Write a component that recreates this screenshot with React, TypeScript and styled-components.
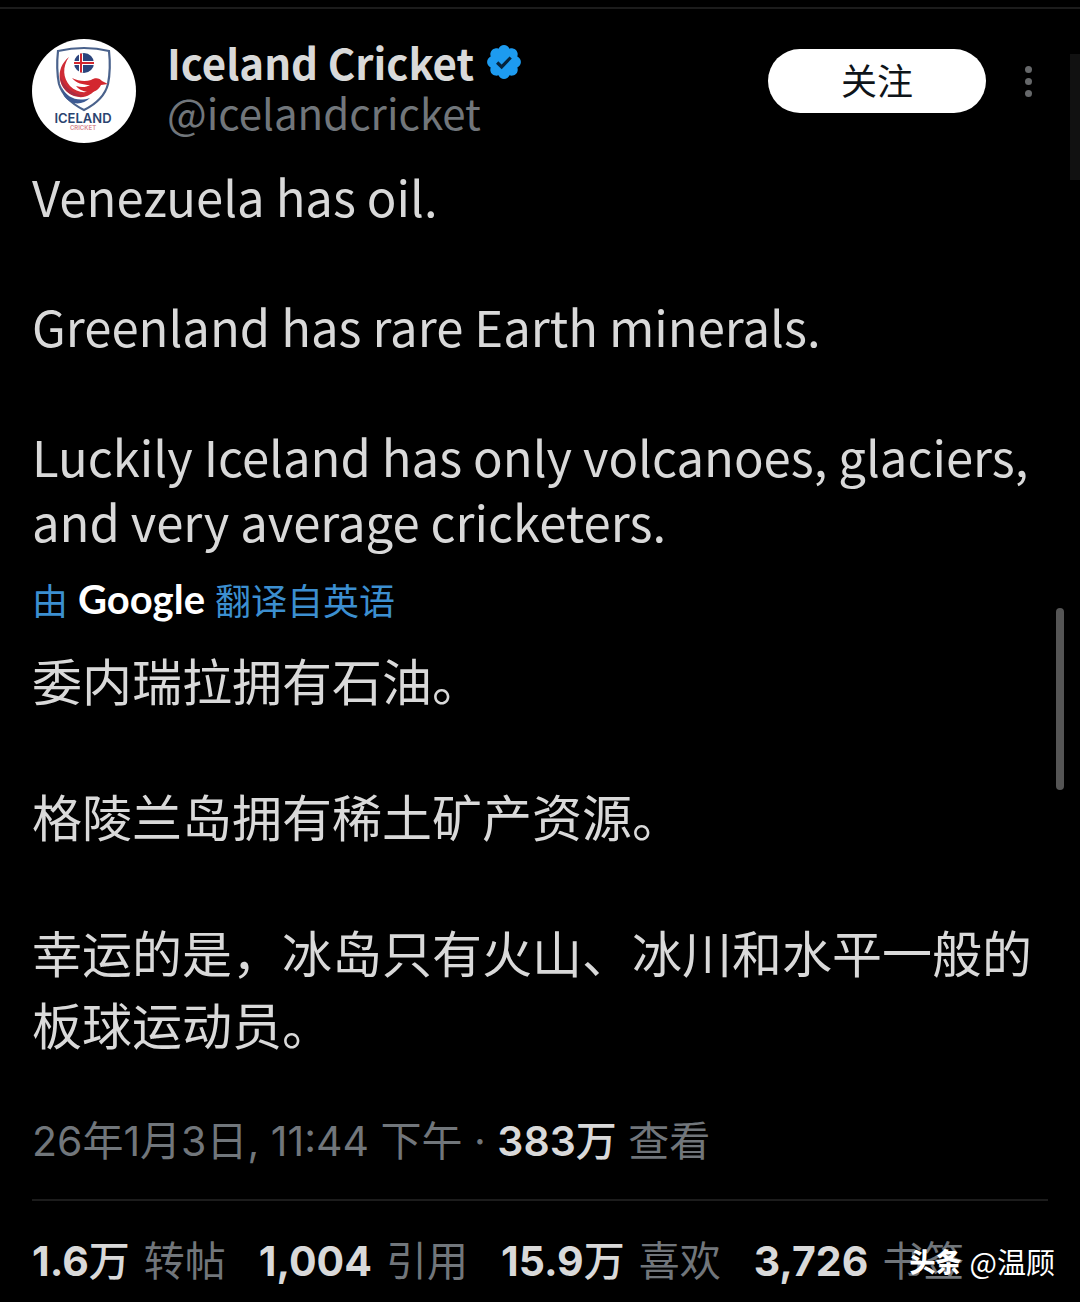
import React from 'react';
import styled, { createGlobalStyle } from 'styled-components';

const text = '"Noto Sans CJK SC", sans-serif';
const figures = 'Inter, "Noto Sans CJK SC", sans-serif';

const GlobalStyle = createGlobalStyle`
  *, *::before, *::after { box-sizing: border-box; }
  body { margin: 0; background: #000; color: #d9d9d9; font-family: ${text}; }
  p, h1 { margin: 0; }
  button { border: 0; font: inherit; cursor: pointer; }
  a { color: inherit; text-decoration: none; }
`;

const Page = styled.main`
  position: relative;
  padding: 7px 32px 12px;
  overflow: hidden;

  &::before {
    content: '';
    display: block;
    height: 2px;
    margin: 0 -32px;
    background: #1c1c1c;
  }
`;

const Header = styled.header`
  display: flex;
  align-items: flex-start;
  padding-top: 30px;
`;

const Avatar = styled.svg`
  flex: none;
  width: 104px;
  height: 104px;
`;

const Identity = styled.div`
  flex: 1;
  display: flex;
  flex-direction: column;
  margin: -2px 0 0 31px;
`;

const NameRow = styled.div`
  display: flex;
  align-items: center;
  gap: 12px;
  height: 50px;
`;

const Name = styled.h1`
  font-size: 42px;
  line-height: 50px;
  font-weight: 700;
`;

const Badge = styled.svg`
  width: 36px;
  height: 36px;
`;

const Handle = styled.a`
  font-size: 42px;
  line-height: 50px;
  color: #71767b;
`;

const Actions = styled.div`
  display: flex;
  align-items: center;
  gap: 32px;
  margin: 10px 10px 0 0;
`;

const Follow = styled.button`
  width: 218px;
  height: 64px;
  padding: 0 0 4px;
  border-radius: 32px;
  background: #fff;
  color: #0f1419;
  font-size: 36px;
  line-height: 60px;
`;

const More = styled.button`
  display: flex;
  flex-direction: column;
  align-items: center;
  gap: 5px;
  width: 20px;
  padding: 0;
  background: none;
`;

const Dot = styled.span`
  width: 7px;
  height: 7px;
  border-radius: 50%;
  background: #66686a;
`;

const Post = styled.section`
  display: flex;
  flex-direction: column;
`;

const Original = styled(Post)`
  gap: 65px;
  padding-top: 20px;
  font-size: 49px;
  line-height: 65px;
`;

const Translation = styled(Post)`
  gap: 64px;
  padding-top: 18px;
  font-size: 50px;
  line-height: 72px;
`;

const Source = styled.p`
  display: flex;
  align-items: center;
  gap: 10px;
  padding-top: 20px;
  color: #3c8fd0;
  font-size: 36px;
  line-height: 52px;
`;

const Google = styled.span`
  color: #fff;
  font-family: Lato, sans-serif;
  font-size: 40px;
  font-weight: 700;
`;

const Meta = styled.p`
  padding: 56px 0 32px;
  border-bottom: 2px solid #1c1c1c;
  font-family: ${figures};
  font-size: 41px;
  line-height: 52px;
  color: #71767b;
  white-space: nowrap;
`;

const Strong = styled.strong<{ $weight: number }>`
  color: #d9d9d9;
  font-weight: ${(p) => p.$weight};
`;

const Unit = styled.span`
  font-weight: 500;
`;

const Stats = styled.div`
  display: flex;
  gap: 33px;
  padding-top: 34px;
  font-family: ${figures};
  font-size: 41px;
  line-height: 52px;
  color: #71767b;
  white-space: nowrap;
`;

const Stat = styled.a`
  display: flex;
  gap: 14px;
`;

const Thumb = styled.div`
  position: absolute;
  top: 608px;
  right: 16px;
  width: 8px;
  height: 182px;
  border-radius: 4px;
  background: #555;
`;

const EdgePanel = styled.div`
  position: absolute;
  top: 54px;
  right: 0;
  width: 10px;
  height: 126px;
  background: #111;
`;

const Watermark = styled.div`
  position: absolute;
  right: 25px;
  bottom: 18px;
  display: flex;
  gap: 8px;
  color: #fff;
  font-size: 29px;
  line-height: 40px;
`;

const WatermarkBrand = styled.b`
  font-size: 26px;
  font-weight: 900;
`;

const stats = [
  { value: '1.6', unit: '万', label: '转帖' },
  { value: '1,004', unit: '', label: '引用' },
  { value: '15.9', unit: '万', label: '喜欢' },
  { value: '3,726', unit: '', label: '书签' },
];

function Crest() {
  return (
    <Avatar viewBox="0 0 104 104" role="img" aria-label="Iceland Cricket">
      <circle cx="52" cy="52" r="52" fill="#fff" />
      <path d="M26 12Q39 9 52 9Q65 9 77 12Q79 30 76 45Q72 61 52 71Q32 61 27 45Q24 30 26 12Z" fill="#fff" stroke="#4a628c" strokeWidth="2.2" />
      <path d="M29 47C35 59 45 63 58 59C51 66 39 67 32 57Z" fill="#3d5a93" />
      <path d="M37 18C22 30 26 51 42 57C51 60 60 57 65 48C57 55 46 55 38 47C31 39 30 28 37 18Z" fill="#cf2b35" />
      <path d="M28 37C29 51 39 59 52 57C41 55 33 49 28 37Z" fill="#a92c43" />
      <path d="M40 39C46 42 53 43 59 41C63 38 68 39 70 42L76 45L69 46C66 52 61 54 55 53C50 52 46 50 44 47C50 49 55 48 58 46C51 46 44 44 40 39Z" fill="#d3272f" />
      <circle cx="52" cy="24" r="10" fill="#2c457d" />
      <path d="M49 14.500V33.500M42 24H62" stroke="#fff" strokeWidth="4" />
      <path d="M49 14.500V33.500M42 24H62" stroke="#d3272f" strokeWidth="2" />
      <text x="51" y="84" textAnchor="middle" fontFamily="Inter, sans-serif" fontSize="13" fontWeight="600" fill="#2b4470">ICELAND</text>
      <text x="51" y="91" textAnchor="middle" fontFamily="Inter, sans-serif" fontSize="6" fontWeight="600" fill="#d88a90">CRICKET</text>
    </Avatar>
  );
}

function Verified() {
  return (
    <Badge viewBox="1 1 20 20" role="img" aria-label="Verified">
      <path
        fill="#1d9bf0"
        d="M20.396 11c-.018-.646-.215-1.275-.57-1.816-.354-.54-.852-.972-1.438-1.246.223-.607.27-1.264.14-1.897-.131-.634-.437-1.218-.882-1.687-.47-.445-1.053-.75-1.687-.882-.633-.13-1.29-.083-1.897.14-.273-.587-.704-1.086-1.245-1.44S11.647 1.62 11 1.604c-.646.017-1.273.213-1.813.568s-.969.854-1.24 1.44c-.608-.223-1.267-.272-1.902-.14-.635.13-1.22.436-1.69.882-.445.47-.749 1.055-.878 1.688-.13.633-.08 1.29.144 1.896-.587.274-1.087.705-1.443 1.245-.356.54-.555 1.17-.574 1.817.02.647.218 1.276.574 1.817.356.54.856.972 1.443 1.245-.224.606-.274 1.263-.144 1.896.13.634.433 1.218.877 1.688.47.443 1.054.747 1.687.878.633.132 1.29.084 1.897-.136.274.586.705 1.084 1.246 1.439.54.354 1.17.551 1.816.569.647-.016 1.276-.213 1.817-.567s.972-.854 1.245-1.44c.604.239 1.266.296 1.903.164.636-.132 1.22-.447 1.68-.907.46-.46.776-1.044.908-1.681s.075-1.299-.165-1.903c.586-.274 1.084-.705 1.439-1.246.354-.54.551-1.17.569-1.816z"
      />
      <path d="M7.200 11.300l2.500 2.400 5-5.200" fill="none" stroke="#06243c" strokeWidth="1.800" />
    </Badge>
  );
}

export default function App() {
  return (
    <>
      <GlobalStyle />
      <Page>
        <Header>
          <Crest />
          <Identity>
            <NameRow>
              <Name>Iceland Cricket</Name>
              <Verified />
            </NameRow>
            <Handle href="#profile">@icelandcricket</Handle>
          </Identity>
          <Actions>
            <Follow type="button">关注</Follow>
            <More type="button" aria-label="More">
              <Dot />
              <Dot />
              <Dot />
            </More>
          </Actions>
        </Header>

        <Original lang="en">
          <p>Venezuela has oil.</p>
          <p>Greenland has rare Earth minerals.</p>
          <p>Luckily Iceland has only volcanoes, glaciers, and very average cricketers.</p>
        </Original>

        <Source>
          由 <Google>Google</Google> 翻译自英语
        </Source>

        <Translation lang="zh-CN">
          <p>委内瑞拉拥有石油。</p>
          <p>格陵兰岛拥有稀土矿产资源。</p>
          <p>幸运的是，冰岛只有火山、冰川和水平一般的板球运动员。</p>
        </Translation>

        <Meta>
          26年1月3日, 11:44 下午 ·{' '}
          <Strong $weight={600}>
            383<Unit>万</Unit>
          </Strong>{' '}
          查看
        </Meta>

        <Stats>
          {stats.map((s) => (
            <Stat key={s.label} href="#stats">
              <Strong $weight={700}>
                {s.value}
                {s.unit && <Unit>{s.unit}</Unit>}
              </Strong>
              <span>{s.label}</span>
            </Stat>
          ))}
        </Stats>

        <EdgePanel />
        <Thumb />
        <Watermark>
          <WatermarkBrand>头条</WatermarkBrand>
          <span>@温顾</span>
        </Watermark>
      </Page>
    </>
  );
}
